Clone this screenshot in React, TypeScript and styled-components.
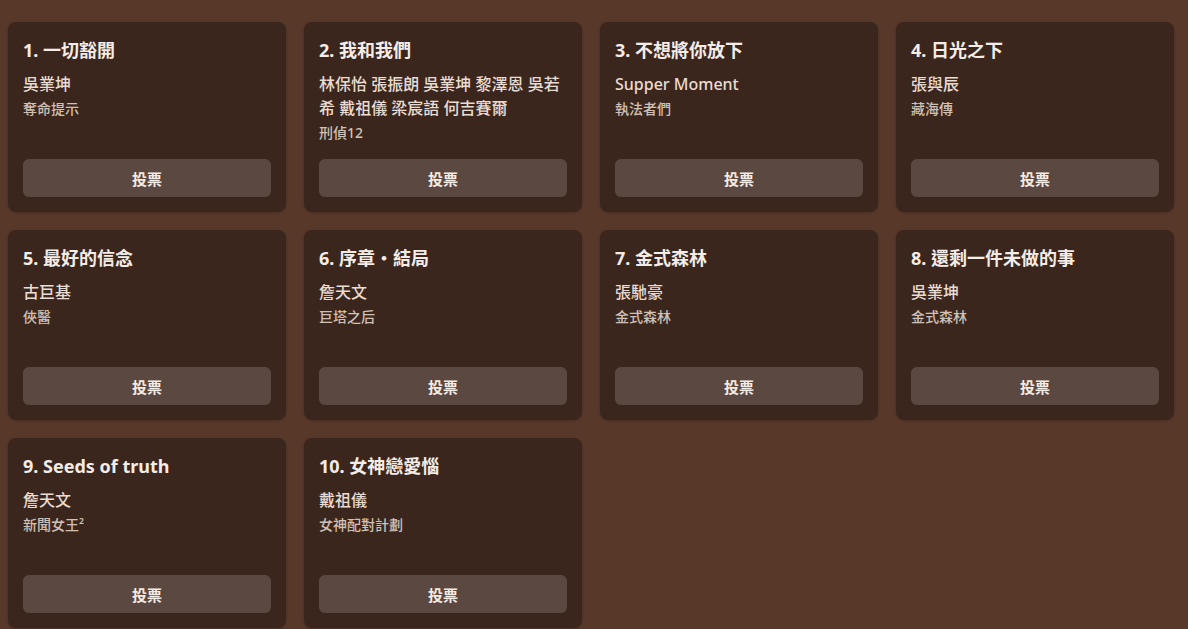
import styled, { createGlobalStyle } from "styled-components";

/* Data */
interface Song {
	title: string;
	artist: string;
	source: string;
}

const songs: Song[] = [
	{ title: "一切豁開", artist: "吳業坤", source: "奪命提示" },
	{ title: "我和我們", artist: "林保怡 張振朗 吳業坤 黎澤恩 吳若希 戴祖儀 梁宸語 何吉賽爾", source: "刑偵12" },
	{ title: "不想將你放下", artist: "Supper Moment", source: "執法者們" },
	{ title: "日光之下", artist: "張與辰", source: "藏海傳" },
	{ title: "最好的信念", artist: "古巨基", source: "俠醫" },
	{ title: "序章・結局", artist: "詹天文", source: "巨塔之后" },
	{ title: "金式森林", artist: "張馳豪", source: "金式森林" },
	{ title: "還剩一件未做的事", artist: "吳業坤", source: "金式森林" },
	{ title: "Seeds of truth", artist: "詹天文", source: "新聞女王²" },
	{ title: "女神戀愛惱", artist: "戴祖儀", source: "女神配對計劃" },
];

/* Styles */
const GlobalStyle = createGlobalStyle`
	html, body {
		margin: 0;
		padding: 0;
		background: #583829;
		font-family: "Noto Sans", "Noto Sans CJK TC", sans-serif;
		overflow: hidden;
	}
`;

const Page = styled.main`
	padding: 22px 14px 0 8px;
	height: 629px;
	box-sizing: border-box;
`;

const Grid = styled.div`
	display: grid;
	grid-template-columns: repeat(4, 278px);
	grid-auto-rows: 190px;
	gap: 18px;
`;

const Card = styled.div`
	display: flex;
	flex-direction: column;
	background-color: #3b261d;
	border-radius: 8px;
	padding: 15px;
	box-sizing: border-box;
	box-shadow: 0 1px 3px rgba(0, 0, 0, 0.18);
`;

const Title = styled.h3`
	margin: 0;
	font-size: 18px;
	font-weight: 700;
	line-height: 27px;
	color: #f4ece6;
`;

const Artist = styled.div`
	margin-top: 8px;
	font-size: 16px;
	font-weight: 500;
	line-height: 24px;
	color: #e8dcd3;
`;

const Source = styled.div`
	margin-top: 2px;
	font-size: 14px;
	font-weight: 500;
	line-height: 21px;
	color: #d0c1b6;
`;

const VoteButton = styled.button`
	margin-top: auto;
	height: 38px;
	width: 100%;
	border: none;
	border-radius: 6px;
	background-color: #5b4840;
	color: #f3ebe5;
	font-family: inherit;
	font-size: 15px;
	font-weight: 700;
	cursor: pointer;
	transition: background-color 0.2s ease;
	:hover {
		background-color: #6a564c;
	}
`;

export default function App() {
	return (
		<>
			<GlobalStyle />
			<Page>
				<Grid>
					{songs.map((song, i) => (
						<Card key={song.title}>
							<Title>{`${i + 1}. ${song.title}`}</Title>
							<Artist>{song.artist}</Artist>
							<Source>{song.source}</Source>
							<VoteButton>投票</VoteButton>
						</Card>
					))}
				</Grid>
			</Page>
		</>
	);
}
